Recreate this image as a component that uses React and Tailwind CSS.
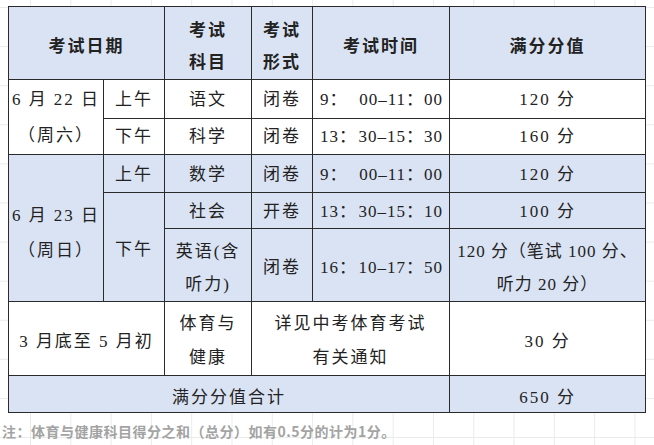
import React from 'react'

const cell = 'border border-[#2a2a2a] text-center align-middle p-0 pt-[2px] whitespace-nowrap'

function Time({ a, b }) {
  // distributed alignment like the Word original: first part left, rest right
  return (
    <div className="flex justify-between px-[7px] tracking-[1px]">
      <span>{a}</span>
      <span className="mr-[-1px]">{b}</span>
    </div>
  )
}

export default function App() {
  return (
    <div className="w-[654px] h-[445px] overflow-hidden bg-white bg-[linear-gradient(to_right,#ebebeb_1px,transparent_1px),linear-gradient(to_bottom,#ebebeb_1px,transparent_1px)] bg-[size:40.3px_39.1px] bg-[position:30px_7px]">
      <div className="pt-[6px] pl-[8px]">
        <table className="table-fixed border-collapse w-[637px] text-[#222] text-[17px] tracking-[2px] leading-[32px] font-['Liberation_Serif','Noto_Sans_CJK_SC',serif]">
          <colgroup>
            <col className="w-[95px]" />
            <col className="w-[61px]" />
            <col className="w-[87px]" />
            <col className="w-[61px]" />
            <col className="w-[137px]" />
            <col className="w-[196px]" />
          </colgroup>
          <tbody>
            {/* header */}
            <tr className="h-[73px] bg-[#dae3f3] font-bold">
              <td colSpan={2} className={cell + ' pt-[8px]'}>考试日期</td>
              <td className={cell + ' pt-[8px]'}>考试<br />科目</td>
              <td className={cell + ' pt-[8px]'}>考试<br />形式</td>
              <td className={cell + ' pt-[8px]'}>考试时间</td>
              <td className={cell + ' pt-[8px]'}>满分分值</td>
            </tr>
            {/* 6月22日 */}
            <tr className="h-[38px] bg-white">
              <td rowSpan={2} className={cell + ' leading-[36px]'}>6 月 22 日<br />（周六）</td>
              <td className={cell}>上午</td>
              <td className={cell}>语文</td>
              <td className={cell}>闭卷</td>
              <td className={cell}><Time a="9：" b="00–11：00" /></td>
              <td className={cell}>120 分</td>
            </tr>
            <tr className="h-[36px] bg-white">
              <td className={cell}>下午</td>
              <td className={cell}>科学</td>
              <td className={cell}>闭卷</td>
              <td className={cell}><Time a="13：" b="30–15：30" /></td>
              <td className={cell}>160 分</td>
            </tr>
            {/* 6月23日 */}
            <tr className="h-[38px] bg-[#dae3f3]">
              <td rowSpan={3} className={cell + ' leading-[35px] pt-[9px]'}>6 月 23 日<br />（周日）</td>
              <td className={cell}>上午</td>
              <td className={cell}>数学</td>
              <td className={cell}>闭卷</td>
              <td className={cell}><Time a="9：" b="00–11：00" /></td>
              <td className={cell}>120 分</td>
            </tr>
            <tr className="h-[36px] bg-[#dae3f3]">
              <td rowSpan={2} className={cell + ' pt-[6px]'}>下午</td>
              <td className={cell}>社会</td>
              <td className={cell}>开卷</td>
              <td className={cell}><Time a="13：" b="30–15：10" /></td>
              <td className={cell}>100 分</td>
            </tr>
            <tr className="h-[72px] bg-[#dae3f3]">
              <td className={cell + ' leading-[33px] pt-[6px]'}>英语(含<br />听力)</td>
              <td className={cell + ' pt-[6px]'}>闭卷</td>
              <td className={cell + ' pt-[6px]'}><Time a="16：" b="10–17：50" /></td>
              <td className={cell + ' tracking-[1px] leading-[33px] pt-[6px]'}>120 分（笔试 100 分、<br />听力 20 分）</td>
            </tr>
            {/* 体育 */}
            <tr className="h-[73px] bg-white">
              <td colSpan={2} className={cell + ' pt-[6px]'}>3 月底至 5 月初</td>
              <td className={cell + ' leading-[34px] pt-[5px]'}>体育与<br />健康</td>
              <td colSpan={2} className={cell + ' leading-[34px] pt-[5px]'}>详见中考体育考试<br />有关通知</td>
              <td className={cell + ' pt-[6px]'}>30 分</td>
            </tr>
            {/* 合计 */}
            <tr className="h-[37px] bg-[#dae3f3]">
              <td colSpan={5} className={cell + ' leading-[28px] pt-[8px]'}>满分分值合计</td>
              <td className={cell + ' leading-[28px] pt-[8px]'}>650 分</td>
            </tr>
          </tbody>
        </table>
      </div>
      <p className="mt-[8px] pl-[2px] text-[14px] leading-[20px] tracking-[0.5px] font-bold text-[#a3a3a3] font-['Noto_Sans_CJK_SC',sans-serif]">
        注：体育与健康科目得分之和（总分）如有0.5分的计为1分。
      </p>
    </div>
  )
}
